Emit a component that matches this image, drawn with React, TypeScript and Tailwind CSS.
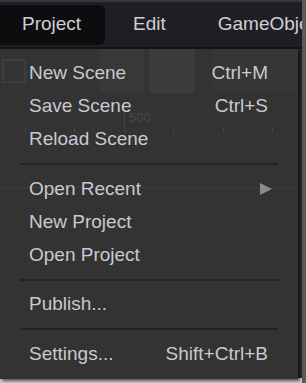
const items: ({ label: string; shortcut?: string; arrow?: boolean } | 'sep')[] = [
  { label: 'New Scene', shortcut: 'Ctrl+M' },
  { label: 'Save Scene', shortcut: 'Ctrl+S' },
  { label: 'Reload Scene' },
  'sep',
  { label: 'Open Recent', arrow: true },
  { label: 'New Project' },
  { label: 'Open Project' },
  'sep',
  { label: 'Publish...' },
  'sep',
  { label: 'Settings...', shortcut: 'Shift+Ctrl+B' },
];

const App = () => {
  return (
    <div
      className="w-[306px] h-[383px] overflow-hidden bg-[#cfcfcf] flex"
      style={{ fontFamily: '"Liberation Sans", Arial, sans-serif' }}
    >
      <div className="w-[302px] h-[378px] shrink-0 flex flex-col bg-[#2b2b2b]">
        {/* menu bar */}
        <div className="h-[49px] shrink-0 bg-[#1f1f23] border-t-2 border-[#37373b] border-b-2 border-b-[#141416] flex items-center text-[19px] text-[#cfcfd7] overflow-hidden">
          <div className="w-[105px] h-[40px] shrink-0 bg-[#0d0d0f] rounded-r-md flex items-center pl-[22px]">
            Project
          </div>
          <div className="ml-[28px] shrink-0">Edit</div>
          <div className="ml-[52px] shrink-0 whitespace-nowrap">GameObject</div>
        </div>

        {/* dropdown */}
        <div className="relative w-[298px] flex-1 bg-[#333333] shadow-[2px_2px_3px_rgba(0,0,0,0.6)] pt-[8px] pb-[8px]">
          {/* editor toolbar showing through the menu */}
          <div className="absolute inset-x-0 top-0 h-[44px] flex pointer-events-none">
            <div className="w-[28px] flex items-center justify-center">
              <div className="w-[24px] h-[24px] border-2 border-[#3d3d3d]" />
            </div>
            <div className="w-[72px]" />
            <div className="w-[44px] bg-[#383838]" />
            <div className="w-[5px]" />
            <div className="w-[46px] bg-[#3b3b3b]" />
            <div className="w-[19px]" />
            <div className="flex-1 bg-[#363636]" />
          </div>
          {/* ruler */}
          <div className="absolute inset-x-0 top-[62px] h-[22px] flex items-end justify-between px-[25px] pointer-events-none">
            {[0, 1, 2, 3, 4, 5].map((t) => (
              <div key={t} className={`w-px bg-[#444] ${t === 2 ? 'h-[20px]' : 'h-[6px]'}`} />
            ))}
          </div>
          <div className="absolute left-[129px] top-[62px] text-[13px] leading-none text-[#4a4a4a] pointer-events-none">500</div>
          <div className="absolute inset-x-0 top-[138px] h-px bg-[#3d3d3d] pointer-events-none" />

          <div className="relative flex flex-col text-[19px] text-[#c9c9d1]">
            {items.map((it, i) =>
              it === 'sep' ? (
                <div key={i} className="h-[16.5px] flex items-center px-[20px]">
                  <div className="w-full h-[2px] bg-[#232323]" />
                </div>
              ) : (
                <div key={i} className="h-[33px] flex items-center justify-between pl-[29px] pr-[30px]">
                  <span>{it.label}</span>
                  {it.shortcut && <span>{it.shortcut}</span>}
                  {it.arrow && (
                    <svg width="12" height="12" viewBox="0 0 12 12" className="mr-[-4px]">
                      <polygon points="0,0 12,6 0,12" fill="#8a8a8e" />
                    </svg>
                  )}
                </div>
              ),
            )}
          </div>
        </div>
      </div>
      <div className="flex-1 bg-[#5a5a5a]" />
    </div>
  );
};

export default App;
